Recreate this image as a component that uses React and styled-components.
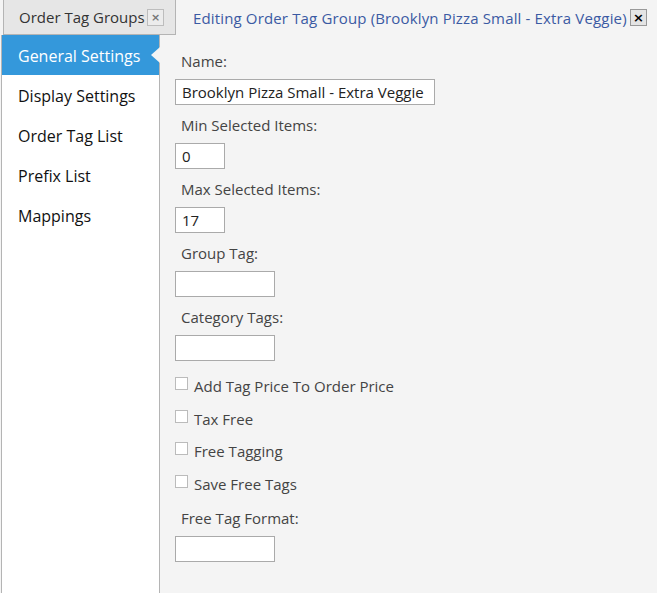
import React from 'react';
import styled, { createGlobalStyle } from 'styled-components';

const GlobalStyle = createGlobalStyle`
  html, body {
    margin: 0;
    padding: 0;
    background: #f4f4f4;
  }
  body {
    font-family: "Open Sans", "Noto Sans", sans-serif;
    color: #333;
  }
`;

const Page = styled.div`
  width: 657px;
  height: 593px;
  display: flex;
  flex-direction: column;
  background: #f4f4f4;
  overflow: hidden;
`;

const Header = styled.div`
  height: 35px;
  display: flex;
  align-items: stretch;
  flex-shrink: 0;
`;

const Tab = styled.div`
  margin-left: 3px;
  width: 173px;
  box-sizing: border-box;
  display: flex;
  align-items: center;
  justify-content: space-between;
  padding: 0 11px 0 15px;
  background: #e6e6e6;
  border: 1px solid #b4b4b4;
  border-top: none;
  font-size: 15px;
  color: #333;
`;

const CloseBox = styled.span`
  width: 17px;
  height: 17px;
  box-sizing: border-box;
  display: flex;
  align-items: center;
  justify-content: center;
  border: 1px solid ${p => (p.$dark ? '#999' : '#bdbdbd')};
  background: ${p => (p.$dark ? '#e4e4e4' : '#ececec')};
  color: ${p => (p.$dark ? '#000' : '#777')};
  font-family: "DejaVu Sans", sans-serif;
  font-size: ${p => (p.$dark ? '13px' : '11px')};
  font-weight: bold;
  letter-spacing: 0;
  line-height: 1;
`;

const Title = styled.div`
  flex: 1;
  display: flex;
  align-items: center;
  justify-content: space-between;
  padding: 0 10px 0 17px;
  font-size: 15px;
  letter-spacing: 0.15px;
  color: #3b5aa3;
`;

const Body = styled.div`
  flex: 1;
  display: flex;
  min-height: 0;
`;

const Sidebar = styled.nav`
  width: 159px;
  margin-left: 1px;
  box-sizing: border-box;
  background: #fff;
  border-left: 1px solid #b4b4b4;
  border-right: 1px solid #b4b4b4;
  display: flex;
  flex-direction: column;
`;

const NavItem = styled.div`
  position: relative;
  height: 40px;
  box-sizing: border-box;
  display: flex;
  align-items: center;
  padding: 2px 0 0 16px;
  font-size: 16px;
  color: ${p => (p.$active ? '#fff' : '#111')};
  background: ${p => (p.$active ? '#3498db' : 'transparent')};

  &::after {
    content: '';
    display: ${p => (p.$active ? 'block' : 'none')};
    position: absolute;
    right: -1px;
    top: 12px;
    border-top: 8px solid transparent;
    border-bottom: 8px solid transparent;
    border-right: 9px solid #f4f4f4;
  }
`;

const Form = styled.div`
  flex: 1;
  padding: 15px 0 0 15px;
  display: flex;
  flex-direction: column;
  align-items: flex-start;
`;

const Label = styled.div`
  font-size: 15px;
  color: #444;
  padding-left: 6px;
  height: 22px;
  line-height: 22px;
  margin: ${p => (p.$after ? '2px' : '0')} 0 7px;
`;

const Input = styled.input`
  width: ${p => p.$w}px;
  height: 26px;
  box-sizing: border-box;
  border: 1px solid #aaa;
  background: #fff;
  padding: 0 6px;
  font-family: "Open Sans", "Noto Sans", sans-serif;
  font-size: 15px;
  color: #222;
  margin: 0 0 9px;
  outline: none;
`;

const Checks = styled.div`
  margin-top: 5px;
  display: flex;
  flex-direction: column;
`;

const CheckRow = styled.label`
  display: flex;
  align-items: flex-start;
  gap: 6px;
  height: 32.5px;
  font-size: 15px;
  color: #444;
`;

const Box = styled.span`
  width: 13px;
  height: 13px;
  flex-shrink: 0;
  box-sizing: border-box;
  border: 1px solid #bbb;
  background: #fff;
  margin-top: 2px;
`;

const CheckText = styled.span`
  line-height: 22px;
`;

const navItems = ['General Settings', 'Display Settings', 'Order Tag List', 'Prefix List', 'Mappings'];
const checks = ['Add Tag Price To Order Price', 'Tax Free', 'Free Tagging', 'Save Free Tags'];

export default function App() {
  return (
    <Page>
      <GlobalStyle />
      <Header>
        <Tab>
          Order Tag Groups
          <CloseBox>×</CloseBox>
        </Tab>
        <Title>
          Editing Order Tag Group (Brooklyn Pizza Small - Extra Veggie)
          <CloseBox $dark>×</CloseBox>
        </Title>
      </Header>
      <Body>
        <Sidebar>
          {navItems.map((n, i) => (
            <NavItem key={n} $active={i === 0}>{n}</NavItem>
          ))}
        </Sidebar>
        <Form>
          <Label>Name:</Label>
          <Input $w={260} defaultValue="Brooklyn Pizza Small - Extra Veggie" />
          <Label>Min Selected Items:</Label>
          <Input $w={50} defaultValue="0" />
          <Label>Max Selected Items:</Label>
          <Input $w={50} defaultValue="17" />
          <Label>Group Tag:</Label>
          <Input $w={100} />
          <Label>Category Tags:</Label>
          <Input $w={100} />
          <Checks>
            {checks.map(c => (
              <CheckRow key={c}>
                <Box />
                <CheckText>{c}</CheckText>
              </CheckRow>
            ))}
          </Checks>
          <Label $after>Free Tag Format:</Label>
          <Input $w={100} />
        </Form>
      </Body>
    </Page>
  );
}
